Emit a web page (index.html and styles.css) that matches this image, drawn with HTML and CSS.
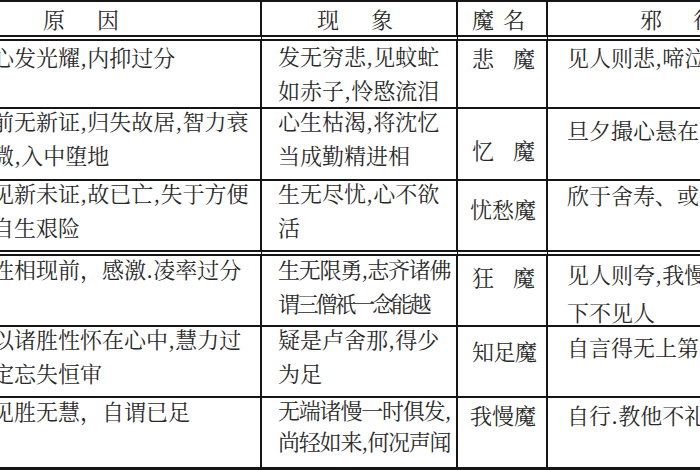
FILE: index.html
```html
<!DOCTYPE html>
<html lang="zh-CN">
<head>
<meta charset="utf-8">
<title>受阴十魔</title>
<link rel="stylesheet" href="styles.css">
</head>
<body>
<div class="sheet">
  <div class="grid">
    <div class="cell head c1 dbl"><span class="h1">原因</span></div>
    <div class="cell head c2 dbl"><span class="h2">现象</span></div>
    <div class="cell head c3 dbl"><span class="h3">魔名</span></div>
    <div class="cell head c4 dbl"><span class="h4">邪行</span></div>

    <div class="cell c1"><div class="t mt-n1">心发光耀,内抑过分</div></div>
    <div class="cell c2"><div class="t mt-n2">发无穷悲,见蚊虻<br>如赤子,怜愍流泪</div></div>
    <div class="cell c3"><div class="t mt0 sp">悲魔</div></div>
    <div class="cell c4"><div class="t mt-n1">见人则悲,啼泣</div></div>

    <div class="cell c1"><div class="t mt-n5">前无新证,归失故居,智力衰<br>微,入中堕地</div></div>
    <div class="cell c2"><div class="t mt-n5">心生枯渴,将沈忆<br>当成勤精进相</div></div>
    <div class="cell c3"><div class="t mt24 sp">忆魔</div></div>
    <div class="cell c4"><div class="t mt4">旦夕撮心悬在</div></div>

    <div class="cell c1 dbl"><div class="t mt-n5">见新未证,故已亡,失于方便<br>自生艰险</div></div>
    <div class="cell c2 dbl"><div class="t mt-n5">生无尽忧,心不欲<br>活</div></div>
    <div class="cell c3 dbl"><div class="t mt11">忧愁魔</div></div>
    <div class="cell c4 dbl"><div class="t mt-n3">欣于舍寿、或</div></div>

    <div class="cell c1"><div class="t mt-n4">性相现前，感激.凌率过分</div></div>
    <div class="cell c2"><div class="t mt-n4"><span class="tight">生无限勇,志齐诸佛</span><br><span class="tighter">谓三僧祇一念能越</span></div></div>
    <div class="cell c3"><div class="t mt4 sp">狂魔</div></div>
    <div class="cell c4"><div class="t mt-n1 loose">见人则夸,我慢<br>下不见人</div></div>

    <div class="cell c1"><div class="t mt-n5">以诸胜性怀在心中,慧力过<br>定忘失恒审</div></div>
    <div class="cell c2"><div class="t mt-n5">疑是卢舍那,得少<br>为足</div></div>
    <div class="cell c3"><div class="t mt7 narrow">知足魔</div></div>
    <div class="cell c4"><div class="t mt3">自言得无上第</div></div>

    <div class="cell c1 last"><div class="t mt-n4">见胜无慧，自谓已足</div></div>
    <div class="cell c2 last"><div class="t mt-n4 snug"><span class="tight">无端诸慢一时俱发,</span><br><span class="tight">尚轻如来,何况声闻</span></div></div>
    <div class="cell c3 last"><div class="t mt0">我慢魔</div></div>
    <div class="cell c4 last"><div class="t mt0">自行.教他不礼</div></div>
  </div>
</div>
</body>
</html>
```

FILE: styles.css
```css
html, body {
  margin: 0;
  padding: 0;
  background: #ffffff;
}

.sheet {
  width: 700px;
  height: 470px;
  overflow: hidden;
  background: #ffffff;
}

.grid {
  display: grid;
  grid-template-columns: 276px 196px 90px 300px;
  grid-template-rows: 39px 68px 72px 75px 71px 71px 72px;
  margin-left: -14px;
  width: 862px;
  border-top: 2px solid #151515;
  font-family: "Noto Serif CJK SC", "Noto Sans CJK SC", "Liberation Serif", serif;
  font-size: 22px;
  color: #2a2a2a;
}

.cell {
  box-sizing: border-box;
  border-right: 2px solid #151515;
  border-bottom: 2px solid #151515;
  white-space: nowrap;
  overflow: hidden;
  line-height: 34px;
}

.cell.dbl {
  border-bottom: 6px double #151515;
}

.cell.last {
  border-bottom: 3px solid #151515;
}

.c1 { padding-left: 6px; }
.c2 { padding-left: 16px; }
.c3 { padding-left: 12px; }
.c4 { padding-left: 19px; border-right: none; }

.head {
  display: flex;
  align-items: center;
  line-height: 24px;
  padding-top: 0;
}

.c1.head { padding-left: 57px; }
.c2.head { padding-left: 55px; }
.c3.head { padding-left: 14px; }
.c4.head { padding-left: 92px; }

.h1, .h2 { letter-spacing: 32px; }
.h3 { letter-spacing: 9px; }
.h4 { letter-spacing: 31px; }

.t { display: block; }

.sp { letter-spacing: 19px; padding-left: 2px; }
.narrow { letter-spacing: -0.5px; padding-left: 2px; }

.tight { letter-spacing: -1.2px; }
.tighter { letter-spacing: -3.2px; }
.snug { line-height: 31px; }
.loose { line-height: 38px; }

.mt-n5 { margin-top: -5px; }
.mt-n4 { margin-top: -4px; }
.mt-n3 { margin-top: -3px; }
.mt-n2 { margin-top: -2px; }
.mt-n1 { margin-top: -1px; }
.mt0 { margin-top: 0; }
.mt3 { margin-top: 3px; }
.mt4 { margin-top: 4px; }
.mt7 { margin-top: 7px; }
.mt11 { margin-top: 11px; }
.mt24 { margin-top: 24px; }
```
